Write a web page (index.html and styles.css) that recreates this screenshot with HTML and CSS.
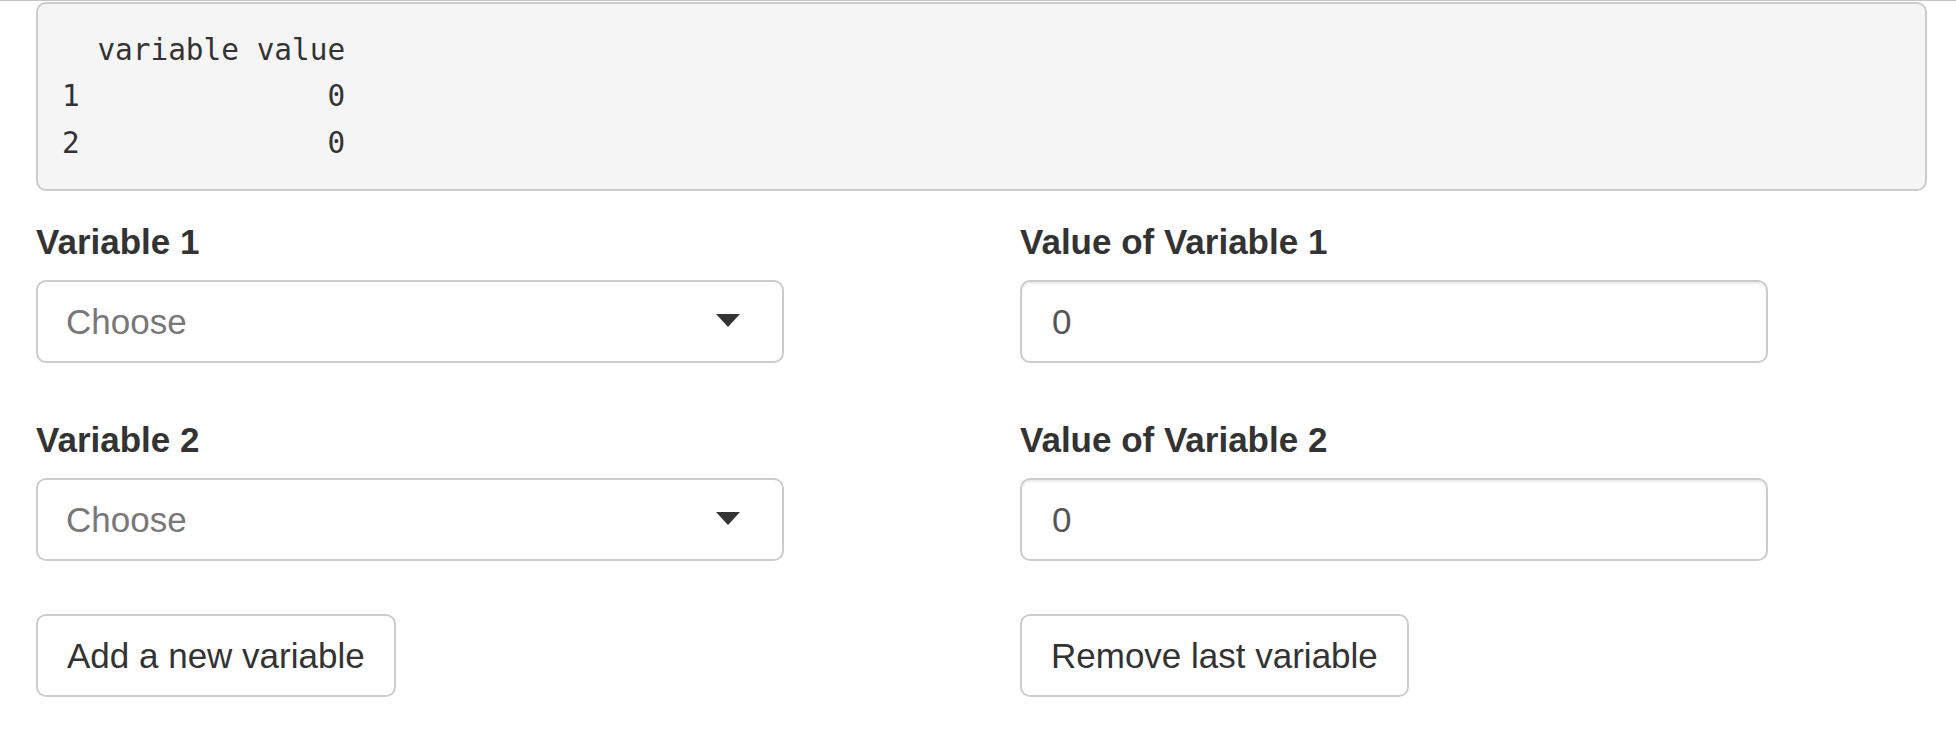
FILE: index.html
```html
<!DOCTYPE html>
<html>
<head>
<meta charset="utf-8">
<link rel="stylesheet" href="styles.css">
</head>
<body>
<div class="topline"></div>
<div class="container">
<pre class="output">  variable value
1              0
2              0</pre>
<div class="row">
  <div class="col">
    <div class="group">
      <label class="lbl">Variable 1</label>
      <div class="select"><span class="placeholder">Choose</span><span class="caret"></span></div>
    </div>
    <div class="group">
      <label class="lbl">Variable 2</label>
      <div class="select"><span class="placeholder">Choose</span><span class="caret"></span></div>
    </div>
    <button class="btn">Add a new variable</button>
  </div>
  <div class="col">
    <div class="group">
      <label class="lbl">Value of Variable 1</label>
      <div class="input">0</div>
    </div>
    <div class="group">
      <label class="lbl">Value of Variable 2</label>
      <div class="input">0</div>
    </div>
    <button class="btn">Remove last variable</button>
  </div>
</div>
</div>
</body>
</html>
```
FILE: styles.css
```css
html, body {
  margin: 0;
  padding: 0;
  background: #ffffff;
}
body {
  font-family: "Liberation Sans", Arial, Helvetica, sans-serif;
  color: #333333;
}
.topline {
  height: 1px;
  background: #c4c4c4;
}
.container {
  padding: 1px 29px 0 36px;
}
.output {
  margin: 0 0 26px 0;
  padding: 23px 23px 23px 24px;
  background: #f5f5f5;
  border: 2px solid #cccccc;
  border-radius: 10px;
  font-family: "DejaVu Sans Mono", "Liberation Mono", monospace;
  font-size: 29.4px;
  line-height: 46.4px;
  color: #333333;
  white-space: pre;
}
.row {
  display: grid;
  grid-template-columns: 984px 1fr;
}
.col {
  display: flex;
  flex-direction: column;
  align-items: flex-start;
}
.group {
  display: flex;
  flex-direction: column;
  margin-bottom: 52px;
}
.lbl {
  font-size: 35px;
  font-weight: bold;
  line-height: 50px;
  margin-bottom: 13px;
  color: #333333;
}
.select, .input {
  box-sizing: border-box;
  width: 748px;
  height: 83px;
  border: 2px solid #cccccc;
  border-radius: 10px;
  background: #ffffff;
  display: flex;
  align-items: center;
  font-size: 35px;
}
.select {
  justify-content: space-between;
  padding: 0 42px 0 28px;
}
.placeholder {
  color: #787878;
}
.caret {
  width: 0;
  height: 0;
  border-left: 12.5px solid transparent;
  border-right: 12.5px solid transparent;
  border-top: 13px solid #333333;
  margin-top: -2px;
}
.input {
  padding: 0 30px;
  color: #555555;
  box-shadow: inset 0 2px 2px rgba(0, 0, 0, 0.075);
}
.btn {
  box-sizing: border-box;
  height: 83px;
  padding: 0 29px;
  border: 2px solid #cccccc;
  border-radius: 10px;
  background: #ffffff;
  font-family: "Liberation Sans", Arial, Helvetica, sans-serif;
  font-size: 35px;
  color: #333333;
  margin-top: 1px;
}
```
